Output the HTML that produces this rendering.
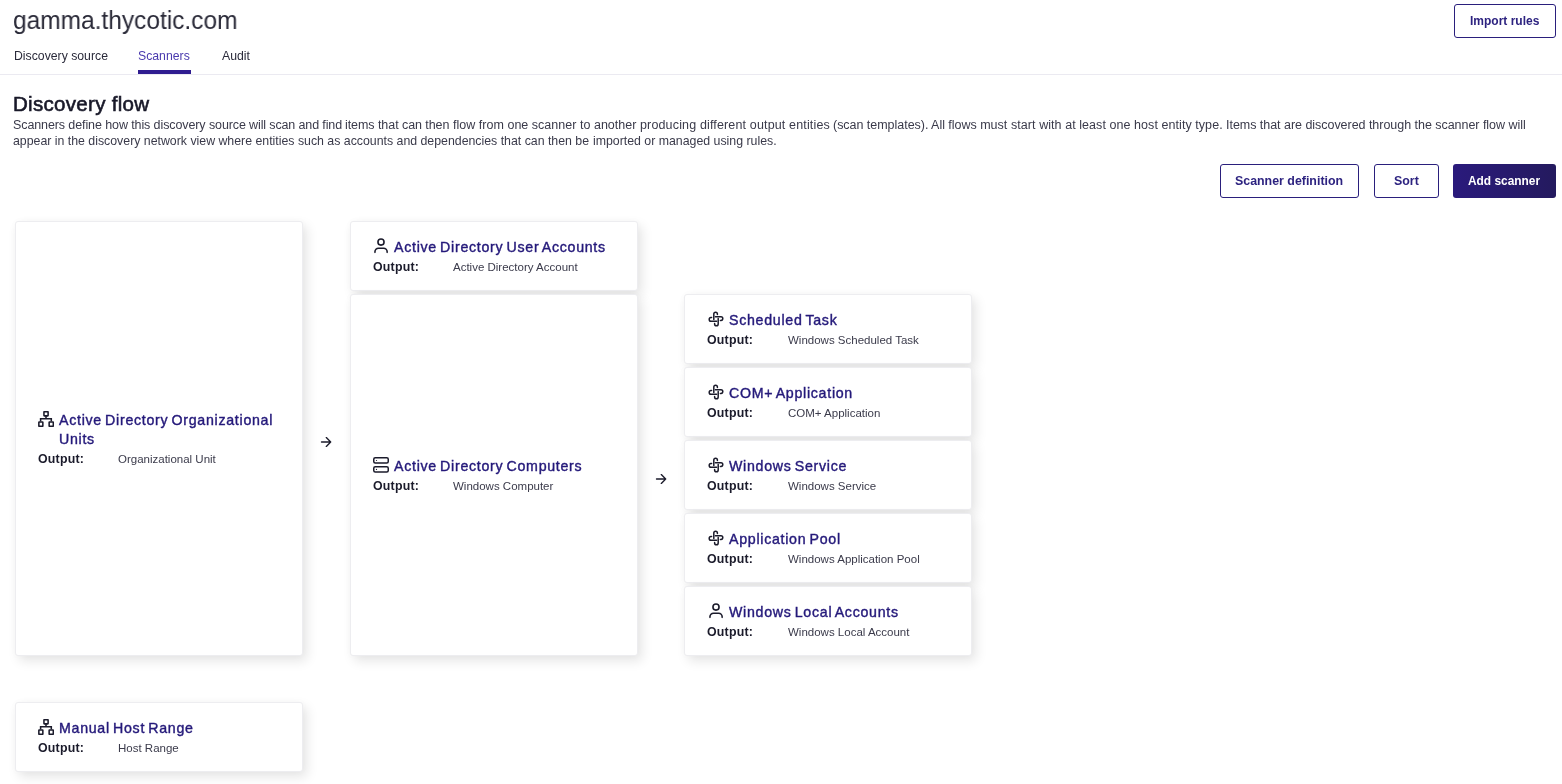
<!DOCTYPE html>
<html><head><meta charset="utf-8">
<style>
html,body{margin:0;padding:0;background:#fff;width:1562px;height:784px;overflow:hidden;position:relative}
body{font-family:"Liberation Sans",sans-serif}
.t{position:absolute;white-space:nowrap;will-change:transform}
.card{position:absolute;box-sizing:border-box;background:#fff;border:1px solid #ededf0;border-radius:3px;
 box-shadow:4px 5px 12px rgba(0,0,0,0.1),0 0 7px rgba(0,0,0,0.025)}
.ic{position:absolute;width:16px;height:16px}
.ic svg{display:block}
.a{position:absolute}
.btn{position:absolute;box-sizing:border-box;border:1px solid #2a1f7c;border-radius:3px;background:#fff}
.sep{position:absolute;left:0;top:74px;width:1562px;height:1px;background:#ebeaf1}
.ul{position:absolute;left:137.6px;top:70.2px;width:53.8px;height:3.6px;background:#2f1c90}
</style></head><body>
<div class="t" style="left:13.20px;top:8.12px;font-size:25.2px;line-height:25.2px;color:#2a2a38;font-weight:normal;letter-spacing:0px;transform:scaleX(0.972);transform-origin:0 0;">gamma.thycotic.com</div>
<div class="t" style="left:14.30px;top:50.08px;font-size:12.25px;line-height:12.25px;color:#2a2a3a;font-weight:normal;letter-spacing:0px;">Discovery source</div>
<div class="t" style="left:138.40px;top:50.08px;font-size:12.25px;line-height:12.25px;color:#4a3aae;font-weight:normal;letter-spacing:0px;">Scanners</div>
<div class="t" style="left:221.50px;top:50.08px;font-size:12.25px;line-height:12.25px;color:#2a2a3a;font-weight:normal;letter-spacing:0px;">Audit</div>
<div class="ul"></div>
<div class="sep"></div>
<div class="t" style="left:12.60px;top:94.10px;font-size:20.5px;line-height:20.5px;color:#181828;font-weight:normal;letter-spacing:0.3px;-webkit-text-stroke:0.6px #181828;">Discovery flow</div>
<div class="t" style="left:13.00px;top:118.87px;font-size:12.5px;line-height:12.5px;color:#3a3a4a;font-weight:normal;letter-spacing:-0.101px;">Scanners define how this discovery</div>
<div class="t" style="left:208.90px;top:118.87px;font-size:12.5px;line-height:12.5px;color:#3a3a4a;font-weight:normal;letter-spacing:-0.128px;">source will scan and find</div>
<div class="t" style="left:345.30px;top:118.87px;font-size:12.5px;line-height:12.5px;color:#3a3a4a;font-weight:normal;letter-spacing:-0.064px;">items that can then</div>
<div class="t" style="left:453.10px;top:118.87px;font-size:12.5px;line-height:12.5px;color:#3a3a4a;font-weight:normal;letter-spacing:0.023px;">flow from one scanner to another</div>
<div class="t" style="left:640.00px;top:118.87px;font-size:12.5px;line-height:12.5px;color:#3a3a4a;font-weight:normal;letter-spacing:0.151px;">producing different output entities</div>
<div class="t" style="left:833.30px;top:118.87px;font-size:12.5px;line-height:12.5px;color:#3a3a4a;font-weight:normal;letter-spacing:-0.03px;">(scan templates). All flows must</div>
<div class="t" style="left:1010.80px;top:118.87px;font-size:12.5px;line-height:12.5px;color:#3a3a4a;font-weight:normal;letter-spacing:0.062px;">start with at least one host entity type.</div>
<div class="t" style="left:1225.90px;top:118.87px;font-size:12.5px;line-height:12.5px;color:#3a3a4a;font-weight:normal;letter-spacing:-0.034px;">Items that are discovered through the scanner flow will</div>
<div class="t" style="left:13.00px;top:135.00px;font-size:12.35px;line-height:12.35px;color:#3a3a4a;font-weight:normal;letter-spacing:-0.01px;">appear in the discovery network view where entities such as accounts and dependencies that can then be</div>
<div class="t" style="left:592.60px;top:135.00px;font-size:12.35px;line-height:12.35px;color:#3a3a4a;font-weight:normal;letter-spacing:-0.01px;">imported or managed using rules.</div>
<div class="btn" style="left:1454px;top:4px;width:102px;height:34px"></div>
<div class="t" style="left:1469.70px;top:15.29px;font-size:12px;line-height:12px;color:#2d2380;font-weight:bold;letter-spacing:0px;">Import rules</div>
<div class="btn" style="left:1220px;top:164px;width:139px;height:34px"></div>
<div class="t" style="left:1235.20px;top:174.95px;font-size:12.4px;line-height:12.4px;color:#2d2380;font-weight:bold;letter-spacing:0px;">Scanner definition</div>
<div class="btn" style="left:1374px;top:164px;width:65px;height:34px"></div>
<div class="t" style="left:1393.80px;top:174.95px;font-size:12.4px;line-height:12.4px;color:#2d2380;font-weight:bold;letter-spacing:0px;">Sort</div>
<div class="btn" style="left:1453px;top:164px;width:103px;height:34px;border:none;background:linear-gradient(90deg,#2a1a7c,#241a5e)"></div>
<div class="t" style="left:1467.60px;top:176.38px;font-size:11.9px;line-height:11.9px;color:#ffffff;font-weight:bold;letter-spacing:0px;">Add scanner</div>
<div class="card" style="left:15px;top:221px;width:288px;height:435px"></div>
<div class="ic" style="left:38px;top:411px"><svg width="16" height="16" viewBox="0 0 16 16" fill="none" stroke="#1b1b2b" stroke-width="1.55"><rect x="5.95" y="0.75" width="4.15" height="4.1" rx="0.3"/><path d="M8 4.85 V7.7 M2.6 10.4 V7.7 H13.3 V10.4"/><rect x="0.85" y="11.05" width="4.0" height="4.2" rx="0.3"/><rect x="11.15" y="11.05" width="4.15" height="4.2" rx="0.3"/></svg></div>
<div class="t" style="left:58.80px;top:413.43px;font-size:14.2px;line-height:14.2px;color:#24197a;font-weight:normal;letter-spacing:0.72px;-webkit-text-stroke:0.4px #24197a;word-spacing:-1.5px;">Active Directory Organizational</div>
<div class="t" style="left:58.80px;top:432.43px;font-size:14.2px;line-height:14.2px;color:#24197a;font-weight:normal;letter-spacing:0.72px;-webkit-text-stroke:0.4px #24197a;word-spacing:-1.5px;">Units</div>
<div class="t" style="left:37.50px;top:454.13px;font-size:11.9px;line-height:11.9px;color:#1b1b2b;font-weight:bold;letter-spacing:0.2px;transform:scaleX(1.04);transform-origin:0 0;">Output:</div>
<div class="t" style="left:118.40px;top:453.72px;font-size:11.5px;line-height:11.5px;color:#3b3b4b;font-weight:normal;letter-spacing:0px;">Organizational Unit</div>
<div class="card" style="left:350px;top:221px;width:288px;height:70px"></div>
<div class="ic" style="left:373px;top:238px"><svg width="16" height="16" viewBox="0 0 16 16" fill="none" stroke="#1b1b2b" stroke-width="1.6" stroke-linecap="round"><circle cx="8" cy="4.1" r="3.05"/><path d="M1.95 14.35 V13.75 a3.5 3.5 0 0 1 3.5 -3.5 h5.2 a3.5 3.5 0 0 1 3.5 3.5 V14.35"/></svg></div>
<div class="t" style="left:393.80px;top:240.43px;font-size:14.2px;line-height:14.2px;color:#24197a;font-weight:normal;letter-spacing:0.72px;-webkit-text-stroke:0.4px #24197a;word-spacing:-1.5px;">Active Directory User Accounts</div>
<div class="t" style="left:372.50px;top:262.13px;font-size:11.9px;line-height:11.9px;color:#1b1b2b;font-weight:bold;letter-spacing:0.2px;transform:scaleX(1.04);transform-origin:0 0;">Output:</div>
<div class="t" style="left:453.40px;top:261.72px;font-size:11.5px;line-height:11.5px;color:#3b3b4b;font-weight:normal;letter-spacing:0px;">Active Directory Account</div>
<div class="card" style="left:350px;top:294px;width:288px;height:362px"></div>
<div class="ic" style="left:373px;top:457px"><svg width="16" height="16" viewBox="0 0 16 16" fill="none" stroke="#1b1b2b" stroke-width="1.5"><rect x="0.75" y="0.75" width="14.5" height="5.3" rx="1.5"/><rect x="0.75" y="9.75" width="14.5" height="5.3" rx="1.5"/><circle cx="3.5" cy="3.5" r="0.6" fill="#1b1b2b" stroke="none"/><circle cx="3.5" cy="12.4" r="0.6" fill="#1b1b2b" stroke="none"/></svg></div>
<div class="t" style="left:393.80px;top:459.43px;font-size:14.2px;line-height:14.2px;color:#24197a;font-weight:normal;letter-spacing:0.72px;-webkit-text-stroke:0.4px #24197a;word-spacing:-1.5px;">Active Directory Computers</div>
<div class="t" style="left:372.50px;top:481.13px;font-size:11.9px;line-height:11.9px;color:#1b1b2b;font-weight:bold;letter-spacing:0.2px;transform:scaleX(1.04);transform-origin:0 0;">Output:</div>
<div class="t" style="left:453.40px;top:480.72px;font-size:11.5px;line-height:11.5px;color:#3b3b4b;font-weight:normal;letter-spacing:0px;">Windows Computer</div>
<div class="card" style="left:684px;top:294px;width:288px;height:70px"></div>
<div class="ic" style="left:708px;top:311px"><svg width="16" height="16" viewBox="0 0 16 16" fill="none" stroke="#1b1b2b" stroke-width="1.5" stroke-linecap="round"><path d="M5.8 8.6 V3 a1.8 1.8 0 0 1 3.6 0 V3.6"/><path d="M5.8 8.6 V3 a1.8 1.8 0 0 1 3.6 0 V3.6" transform="rotate(90 8 8)"/><path d="M5.8 8.6 V3 a1.8 1.8 0 0 1 3.6 0 V3.6" transform="rotate(180 8 8)"/><path d="M5.8 8.6 V3 a1.8 1.8 0 0 1 3.6 0 V3.6" transform="rotate(270 8 8)"/></svg></div>
<div class="t" style="left:728.70px;top:313.43px;font-size:14.2px;line-height:14.2px;color:#24197a;font-weight:normal;letter-spacing:0.72px;-webkit-text-stroke:0.4px #24197a;word-spacing:-1.5px;">Scheduled Task</div>
<div class="t" style="left:707.40px;top:335.13px;font-size:11.9px;line-height:11.9px;color:#1b1b2b;font-weight:bold;letter-spacing:0.2px;transform:scaleX(1.04);transform-origin:0 0;">Output:</div>
<div class="t" style="left:788.30px;top:334.72px;font-size:11.5px;line-height:11.5px;color:#3b3b4b;font-weight:normal;letter-spacing:0px;">Windows Scheduled Task</div>
<div class="card" style="left:684px;top:367px;width:288px;height:70px"></div>
<div class="ic" style="left:708px;top:384px"><svg width="16" height="16" viewBox="0 0 16 16" fill="none" stroke="#1b1b2b" stroke-width="1.5" stroke-linecap="round"><path d="M5.8 8.6 V3 a1.8 1.8 0 0 1 3.6 0 V3.6"/><path d="M5.8 8.6 V3 a1.8 1.8 0 0 1 3.6 0 V3.6" transform="rotate(90 8 8)"/><path d="M5.8 8.6 V3 a1.8 1.8 0 0 1 3.6 0 V3.6" transform="rotate(180 8 8)"/><path d="M5.8 8.6 V3 a1.8 1.8 0 0 1 3.6 0 V3.6" transform="rotate(270 8 8)"/></svg></div>
<div class="t" style="left:728.70px;top:386.43px;font-size:14.2px;line-height:14.2px;color:#24197a;font-weight:normal;letter-spacing:0.72px;-webkit-text-stroke:0.4px #24197a;word-spacing:-1.5px;">COM+ Application</div>
<div class="t" style="left:707.40px;top:408.13px;font-size:11.9px;line-height:11.9px;color:#1b1b2b;font-weight:bold;letter-spacing:0.2px;transform:scaleX(1.04);transform-origin:0 0;">Output:</div>
<div class="t" style="left:788.30px;top:407.72px;font-size:11.5px;line-height:11.5px;color:#3b3b4b;font-weight:normal;letter-spacing:0px;">COM+ Application</div>
<div class="card" style="left:684px;top:440px;width:288px;height:70px"></div>
<div class="ic" style="left:708px;top:457px"><svg width="16" height="16" viewBox="0 0 16 16" fill="none" stroke="#1b1b2b" stroke-width="1.5" stroke-linecap="round"><path d="M5.8 8.6 V3 a1.8 1.8 0 0 1 3.6 0 V3.6"/><path d="M5.8 8.6 V3 a1.8 1.8 0 0 1 3.6 0 V3.6" transform="rotate(90 8 8)"/><path d="M5.8 8.6 V3 a1.8 1.8 0 0 1 3.6 0 V3.6" transform="rotate(180 8 8)"/><path d="M5.8 8.6 V3 a1.8 1.8 0 0 1 3.6 0 V3.6" transform="rotate(270 8 8)"/></svg></div>
<div class="t" style="left:728.70px;top:459.43px;font-size:14.2px;line-height:14.2px;color:#24197a;font-weight:normal;letter-spacing:0.72px;-webkit-text-stroke:0.4px #24197a;word-spacing:-1.5px;">Windows Service</div>
<div class="t" style="left:707.40px;top:481.13px;font-size:11.9px;line-height:11.9px;color:#1b1b2b;font-weight:bold;letter-spacing:0.2px;transform:scaleX(1.04);transform-origin:0 0;">Output:</div>
<div class="t" style="left:788.30px;top:480.72px;font-size:11.5px;line-height:11.5px;color:#3b3b4b;font-weight:normal;letter-spacing:0px;">Windows Service</div>
<div class="card" style="left:684px;top:513px;width:288px;height:70px"></div>
<div class="ic" style="left:708px;top:530px"><svg width="16" height="16" viewBox="0 0 16 16" fill="none" stroke="#1b1b2b" stroke-width="1.5" stroke-linecap="round"><path d="M5.8 8.6 V3 a1.8 1.8 0 0 1 3.6 0 V3.6"/><path d="M5.8 8.6 V3 a1.8 1.8 0 0 1 3.6 0 V3.6" transform="rotate(90 8 8)"/><path d="M5.8 8.6 V3 a1.8 1.8 0 0 1 3.6 0 V3.6" transform="rotate(180 8 8)"/><path d="M5.8 8.6 V3 a1.8 1.8 0 0 1 3.6 0 V3.6" transform="rotate(270 8 8)"/></svg></div>
<div class="t" style="left:728.70px;top:532.43px;font-size:14.2px;line-height:14.2px;color:#24197a;font-weight:normal;letter-spacing:0.72px;-webkit-text-stroke:0.4px #24197a;word-spacing:-1.5px;">Application Pool</div>
<div class="t" style="left:707.40px;top:554.13px;font-size:11.9px;line-height:11.9px;color:#1b1b2b;font-weight:bold;letter-spacing:0.2px;transform:scaleX(1.04);transform-origin:0 0;">Output:</div>
<div class="t" style="left:788.30px;top:553.72px;font-size:11.5px;line-height:11.5px;color:#3b3b4b;font-weight:normal;letter-spacing:0px;">Windows Application Pool</div>
<div class="card" style="left:684px;top:586px;width:288px;height:70px"></div>
<div class="ic" style="left:708px;top:603px"><svg width="16" height="16" viewBox="0 0 16 16" fill="none" stroke="#1b1b2b" stroke-width="1.6" stroke-linecap="round"><circle cx="8" cy="4.1" r="3.05"/><path d="M1.95 14.35 V13.75 a3.5 3.5 0 0 1 3.5 -3.5 h5.2 a3.5 3.5 0 0 1 3.5 3.5 V14.35"/></svg></div>
<div class="t" style="left:728.70px;top:605.43px;font-size:14.2px;line-height:14.2px;color:#24197a;font-weight:normal;letter-spacing:0.72px;-webkit-text-stroke:0.4px #24197a;word-spacing:-1.5px;">Windows Local Accounts</div>
<div class="t" style="left:707.40px;top:627.13px;font-size:11.9px;line-height:11.9px;color:#1b1b2b;font-weight:bold;letter-spacing:0.2px;transform:scaleX(1.04);transform-origin:0 0;">Output:</div>
<div class="t" style="left:788.30px;top:626.72px;font-size:11.5px;line-height:11.5px;color:#3b3b4b;font-weight:normal;letter-spacing:0px;">Windows Local Account</div>
<div class="card" style="left:15px;top:702px;width:288px;height:70px"></div>
<div class="ic" style="left:38px;top:719px"><svg width="16" height="16" viewBox="0 0 16 16" fill="none" stroke="#1b1b2b" stroke-width="1.55"><rect x="5.95" y="0.75" width="4.15" height="4.1" rx="0.3"/><path d="M8 4.85 V7.7 M2.6 10.4 V7.7 H13.3 V10.4"/><rect x="0.85" y="11.05" width="4.0" height="4.2" rx="0.3"/><rect x="11.15" y="11.05" width="4.15" height="4.2" rx="0.3"/></svg></div>
<div class="t" style="left:58.80px;top:721.43px;font-size:14.2px;line-height:14.2px;color:#24197a;font-weight:normal;letter-spacing:0.72px;-webkit-text-stroke:0.4px #24197a;word-spacing:-1.5px;">Manual Host Range</div>
<div class="t" style="left:37.50px;top:743.13px;font-size:11.9px;line-height:11.9px;color:#1b1b2b;font-weight:bold;letter-spacing:0.2px;transform:scaleX(1.04);transform-origin:0 0;">Output:</div>
<div class="t" style="left:118.40px;top:742.72px;font-size:11.5px;line-height:11.5px;color:#3b3b4b;font-weight:normal;letter-spacing:0px;">Host Range</div>
<svg class="a" style="left:320px;top:435.6px" width="12" height="12" viewBox="0 0 12 12" fill="none" stroke="#1b1b2b" stroke-width="1.35" stroke-linecap="round" stroke-linejoin="round"><path d="M1.5 6 H10.7 M6.3 1.6 L10.7 6 L6.3 10.4"/></svg>
<svg class="a" style="left:655px;top:472.6px" width="12" height="12" viewBox="0 0 12 12" fill="none" stroke="#1b1b2b" stroke-width="1.35" stroke-linecap="round" stroke-linejoin="round"><path d="M1.5 6 H10.7 M6.3 1.6 L10.7 6 L6.3 10.4"/></svg>
</body></html>
